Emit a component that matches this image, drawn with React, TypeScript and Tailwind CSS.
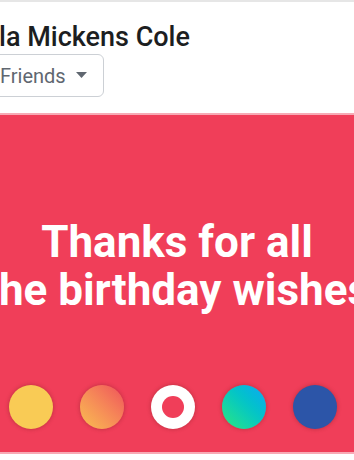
import React from "react";

export default function App() {
  const font = { fontFamily: "Roboto, 'Noto Sans', sans-serif" };
  return (
    <div className="w-[354px] h-[460px] overflow-hidden bg-white border-t-2 border-[#e6e6e6] flex flex-col" style={font}>
      <div className="flex flex-col pt-[18px] h-[111px]">
        <div className="text-[27px] leading-[34px] font-medium text-[#1c1e21] whitespace-nowrap -ml-[1px]">la Mickens Cole</div>
        <div className="flex">
          <div className="-ml-[15px] h-[43px] w-[119px] border border-[#ccd0d5] rounded-[6px] flex items-center pl-[14px] gap-[10px]">
            <span className="text-[20px] text-[#606770] whitespace-nowrap">Friends</span>
            <svg width="11" height="6" viewBox="0 0 11 6" className="mt-[-2px]"><path d="M0 0 L11 0 L5.5 6 Z" fill="#606770" /></svg>
          </div>
        </div>
      </div>
      <div className="h-[2px] bg-[#f7aab5]" />
      <div className="h-[337px] bg-[#f03e59] flex flex-col">
        <div className="flex flex-col items-center pt-[103px] text-white font-bold text-[44px] leading-[48px]">
          <div className="flex justify-center w-full whitespace-nowrap">Thanks for all</div>
          <div className="flex justify-center w-full whitespace-nowrap">the birthday wishes</div>
        </div>
        <div className="flex justify-center gap-[27px] mt-[71px] ml-[-8px]">
          <div className="w-[44px] h-[44px] rounded-full bg-[#f9cb55] shadow-[0_0_4px_rgba(120,30,30,0.45)]" />
          <div className="w-[44px] h-[44px] rounded-full bg-gradient-to-tr from-[#f8be4f] to-[#ee4f5a] shadow-[0_0_4px_rgba(120,30,30,0.45)]" />
          <div className="w-[44px] h-[44px] rounded-full bg-white flex items-center justify-center shadow-[0_0_4px_rgba(120,30,30,0.45)]">
            <div className="w-[22px] h-[22px] rounded-full bg-[#f03e59]" />
          </div>
          <div className="w-[44px] h-[44px] rounded-full bg-gradient-to-tr from-[#2de776] to-[#17a5f4] shadow-[0_0_4px_rgba(120,30,30,0.45)]" />
          <div className="w-[44px] h-[44px] rounded-full bg-[#2c55a8] shadow-[0_0_4px_rgba(120,30,30,0.45)]" />
        </div>
      </div>
      <div className="h-[2px] bg-[#f7aab5]" />
    </div>
  );
}
